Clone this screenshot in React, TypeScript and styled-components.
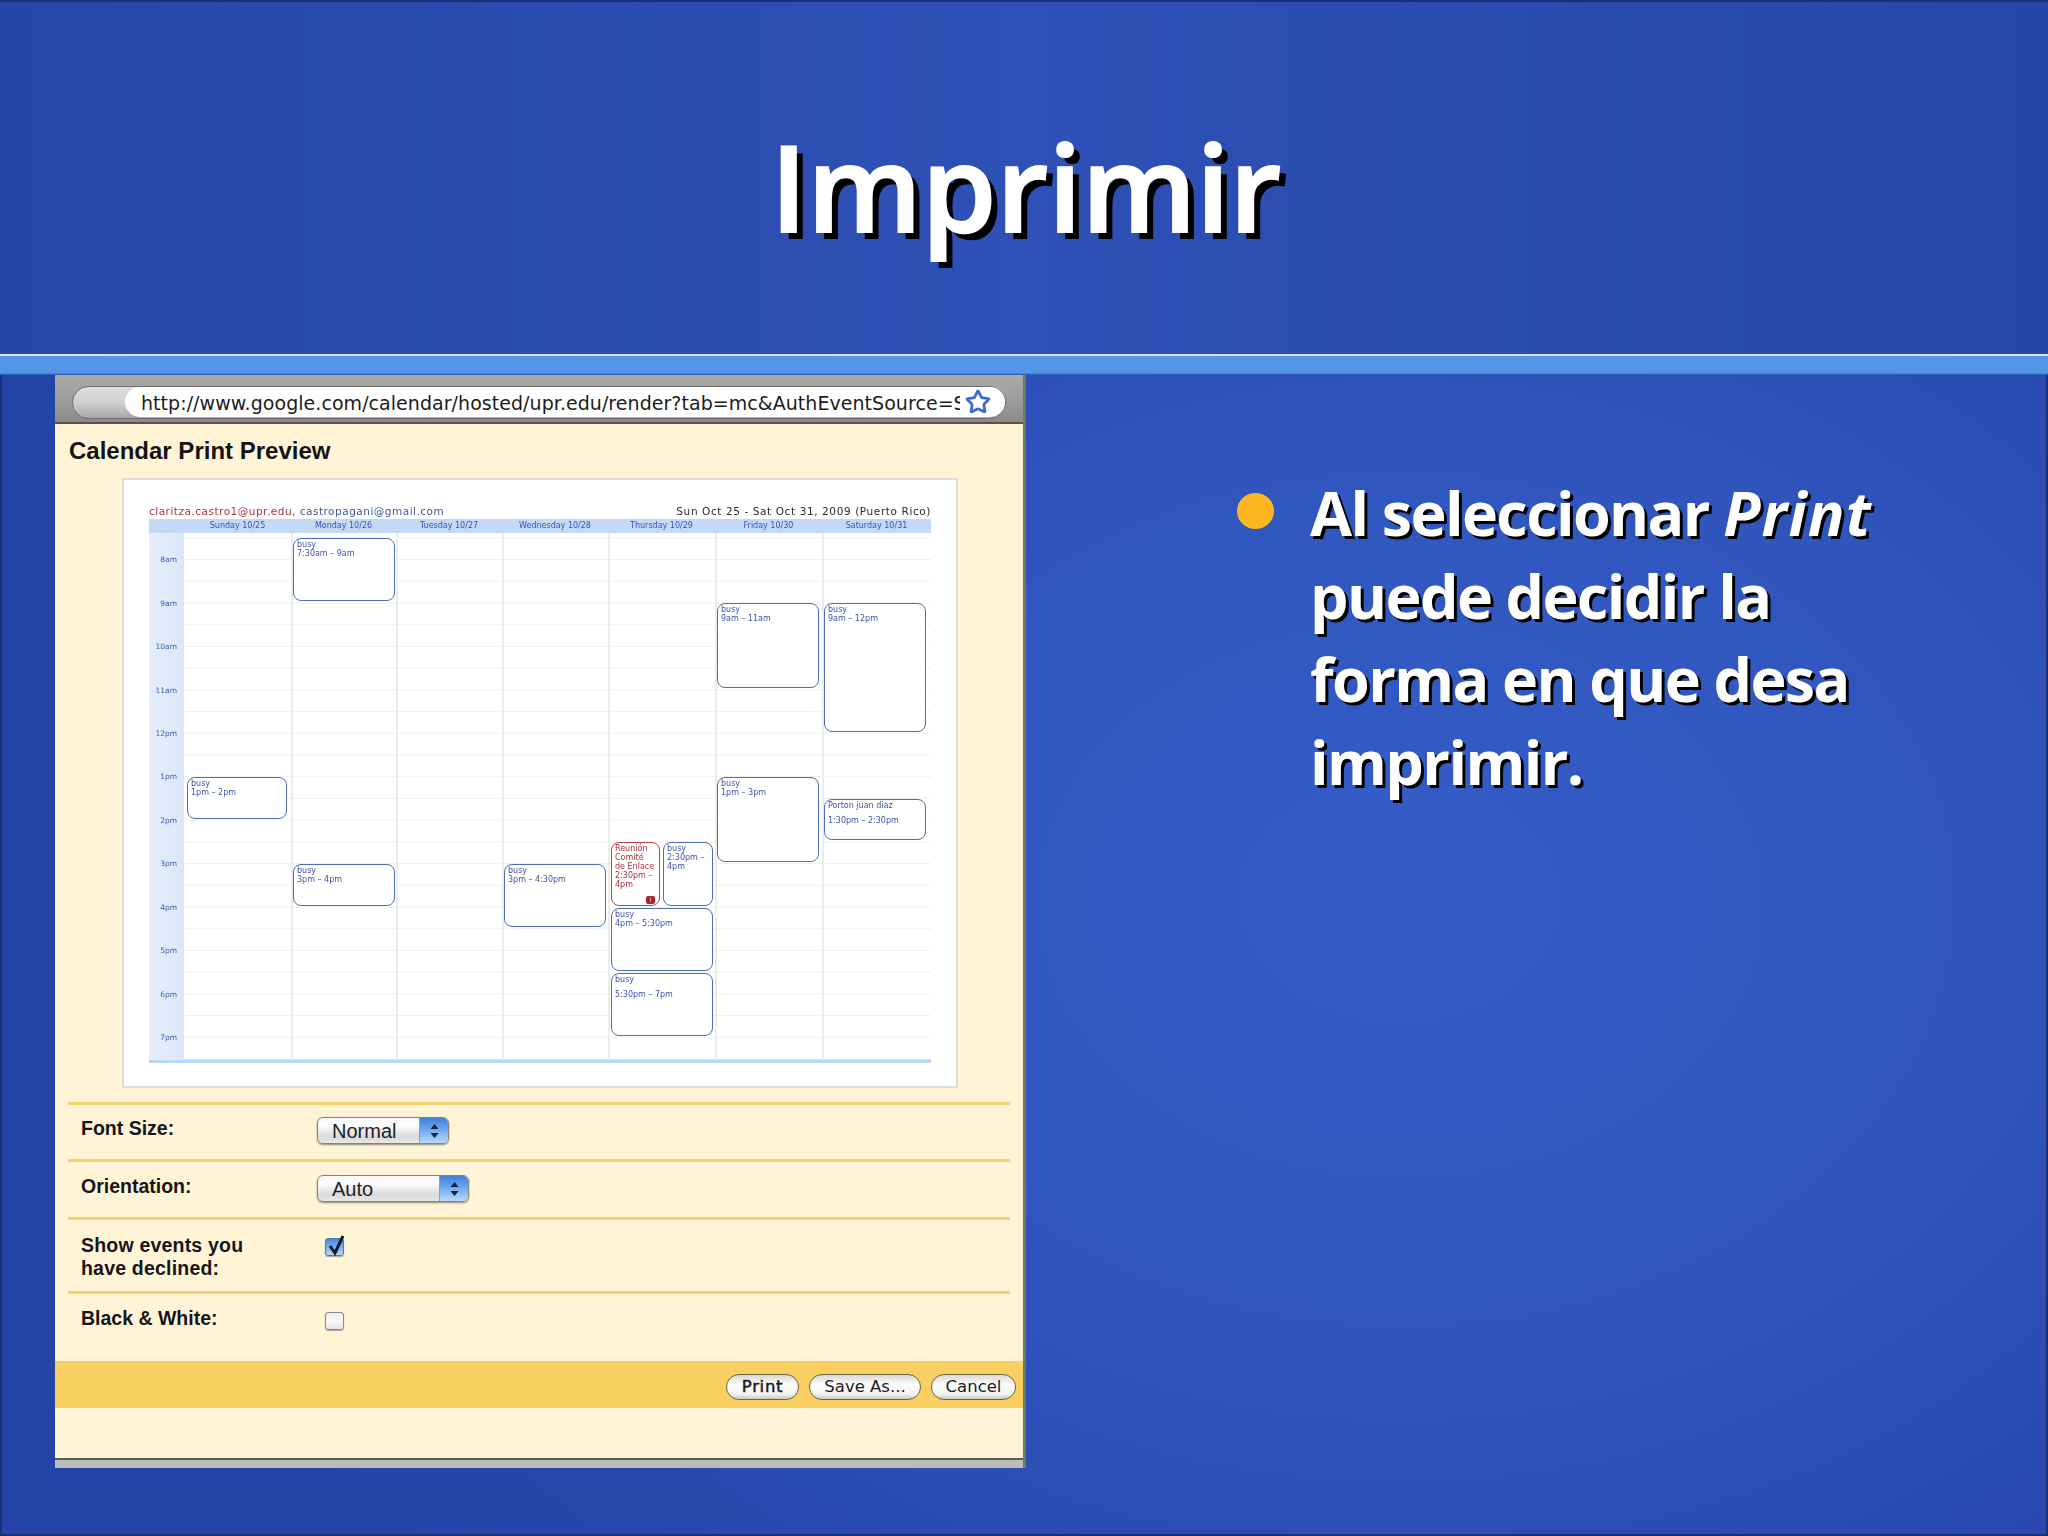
import React from "react";
import styled, { createGlobalStyle } from "styled-components";
import { Star } from "lucide-react";

const Global = createGlobalStyle`
  html, body { margin: 0; padding: 0; background: #2443a6; }
  * { box-sizing: border-box; }
`;

const Slide = styled.div`
  position: relative;
  width: 2048px;
  height: 1536px;
  overflow: hidden;
  display: flex;
  flex-direction: column;
  background: radial-gradient(ellipse 1300px 1000px at 1400px 900px, #355cc8 0%, #3056be 45%, #2848ae 80%, #2544a8 100%);
  box-shadow: inset 0 0 0 2px #1c2f7c;
  font-family: "Liberation Sans", Arial, sans-serif;
`;

const Header = styled.header`
  height: 354px;
  flex: none;
  padding-top: 106px;
  display: flex;
  justify-content: center;
  background: linear-gradient(90deg, #2646a8 0%, #2f50b6 50%, #2646a8 100%);
  box-shadow: inset 0 2px 0 #1c2f7c;
`;

const Title = styled.h1`
  margin: 0 0 0 4px;
  font-family: "Open Sans", Lato, sans-serif;
  font-weight: 600;
  font-size: 120px;
  line-height: 160px;
  color: #fff;
  -webkit-text-stroke: 2px #fff;
  text-shadow: 7px 7px 0 #000;
`;

const Band = styled.div`
  height: 21px;
  flex: none;
  background: linear-gradient(180deg, #d4e4f8 0, #d4e4f8 2px, #5496e6 2px, #5496e6 19px, #3b6fc8 20px, #2c52b4 21px);
`;

const Content = styled.main`
  flex: 1;
  display: flex;
  align-items: flex-start;
`;

const Window = styled.section`
  margin-left: 55px;
  width: 971px;
  height: 1093px;
  flex: none;
  display: flex;
  flex-direction: column;
  background: #fff4d6;
  border-right: 3px solid #6f7a56;
`;

const Toolbar = styled.div`
  height: 49px;
  flex: none;
  padding: 11px 0 0 17px;
  background: linear-gradient(180deg, #aaaaa8 0%, #9a9a98 60%, #8a8a88 100%);
  border-bottom: 2px solid #55554f;
`;

const UrlBar = styled.div`
  width: 934px;
  height: 33px;
  padding-left: 52px;
  border-radius: 17px;
  border: 1px solid #6e6e6c;
  background: linear-gradient(180deg, #dedede 0%, #d0d0d0 50%, #a8a8a8 100%);
`;

const UrlField = styled.div`
  height: 30px;
  padding-left: 16px;
  display: flex;
  align-items: center;
  border-radius: 15px;
  background: #fff;
`;

const UrlText = styled.span`
  width: 819px;
  flex: none;
  padding-top: 2px;
  overflow: hidden;
  white-space: nowrap;
  font-family: "DejaVu Sans", sans-serif;
  font-size: 19px;
  letter-spacing: 0.05px;
  color: #1c1c1c;
`;

const StarSlot = styled.span`
  display: flex;
  margin-left: 5px;
  color: #3a6dcc;
`;

const PreviewTitle = styled.h2`
  margin: 13px 0 0 14px;
  font-size: 24px;
  line-height: 28px;
  font-weight: 700;
  color: #141414;
`;

const PreviewBox = styled.div`
  margin: 13px 0 0 67px;
  width: 836px;
  height: 610px;
  flex: none;
  padding: 24px 25px 0;
  background: #fff;
  border: 2px solid #dcdcd4;
  filter: blur(0.4px);
  font-family: "DejaVu Sans", sans-serif;
`;

const CalHeading = styled.div`
  height: 14px;
  display: flex;
  justify-content: space-between;
  align-items: center;
  font-size: 10.5px;
  letter-spacing: 0.5px;
  white-space: nowrap;
`;

const Owner = styled.span<{ $red?: boolean }>`
  color: ${(p) => (p.$red ? "#a83840" : "#3f5a9c")};
`;

const RangeText = styled.span`
  color: #2a2a2a;
  font-size: 10.5px;
  letter-spacing: 0.6px;
`;

const columns = "35px 107px 105px 106px 106px 107px 107px 109px";

const DayHeader = styled.div`
  display: grid;
  grid-template-columns: ${columns};
  height: 14px;
  margin-top: 1px;
  background: #c4d9f8;
`;

const DayName = styled.div`
  text-align: center;
  font-size: 8px;
  line-height: 14px;
  color: #3553b8;
  white-space: nowrap;
`;

const CalBody = styled.div`
  display: grid;
  grid-template-columns: ${columns};
  height: 526px;
`;

const HourColumn = styled.div`
  padding-top: 5.3px;
  background: linear-gradient(90deg, #e6eefb 0%, #dbe6f9 100%);
`;

const Hour = styled.div`
  height: 43.45px;
  padding-right: 7px;
  text-align: right;
  font-size: 7.5px;
  line-height: 43.45px;
  color: #3c5ab4;
`;

const DayColumn = styled.div<{ $first?: boolean }>`
  position: relative;
  background-image: linear-gradient(#f0f0f0 1px, transparent 1px);
  background-size: 100% 21.725px;
  background-position: 0 4.3px;
  border-left: ${(p) => (p.$first ? "0" : "2px solid #ecece8")};
`;

const Event = styled.div<{ $top: number; $height: number; $left: number; $width: number; $red?: boolean }>`
  position: absolute;
  top: ${(p) => p.$top}px;
  left: ${(p) => p.$left}px;
  width: ${(p) => p.$width}px;
  height: ${(p) => p.$height}px;
  padding: 1px 1px 0 3px;
  background: #fff;
  border: 1.8px solid ${(p) => (p.$red ? "#b04850" : "#4c6fb2")};
  border-radius: 8px;
  font-size: 8px;
  line-height: 9px;
  white-space: pre-line;
  color: ${(p) => (p.$red ? "#a83038" : "#3c55a8")};
`;

const EventName = styled.div<{ $gap?: number }>`
  margin-bottom: ${(p) => p.$gap ?? 0}px;
`;

const Badge = styled.span`
  position: absolute;
  right: 4px;
  bottom: 1px;
  width: 9px;
  height: 8px;
  border-radius: 2px;
  background: #a82830;
  color: #fff;
  font-size: 6px;
  line-height: 8px;
  text-align: center;
`;

const CalFoot = styled.div`
  height: 4px;
  background: #bcd6f7;
`;

const Form = styled.div`
  margin: 14px 0 0 13px;
  width: 942px;
`;

const Row = styled.div<{ $h: number; $pad: number }>`
  height: ${(p) => p.$h}px;
  padding: ${(p) => p.$pad}px 0 0 13px;
  display: grid;
  grid-template-columns: 236px 1fr;
  align-items: start;
  border-top: 3px solid #f7cf6c;
`;

const Label = styled.div<{ $wide?: boolean }>`
  font-size: 19.5px;
  line-height: 23px;
  font-weight: 700;
  color: #16161a;
  letter-spacing: ${(p) => (p.$wide ? "0.2px" : "0")};
`;

const Select = styled.div<{ $w: number }>`
  width: ${(p) => p.$w}px;
  height: 27px;
  display: flex;
  justify-content: space-between;
  overflow: hidden;
  border: 1px solid #85857f;
  border-radius: 6px;
  background: linear-gradient(180deg, #f6f6f6 0%, #fdfdfd 30%, #dadada 75%, #e8e8e8 100%);
  box-shadow: 0 1px 2px #8c8a78;
  font-size: 20px;
  line-height: 27px;
  color: #1e1e1e;
  padding-left: 14px;
`;

const SelectArrows = styled.span`
  width: 29px;
  display: flex;
  align-items: center;
  justify-content: center;
  border-left: 1px solid #7aa0d8;
  background: linear-gradient(180deg, #3f7fd8 0%, #6aa8ee 45%, #b8d8fa 100%);
`;

const Check = styled.div<{ $top: number; $on?: boolean }>`
  position: relative;
  margin: ${(p) => p.$top}px 0 0 8px;
  width: 19px;
  height: 18px;
  border: 1px solid ${(p) => (p.$on ? "#4f77b8" : "#8a8a84")};
  border-radius: 3px;
  box-shadow: 0 1px 1px #a8a690;
  background: ${(p) =>
    p.$on
      ? "linear-gradient(180deg, #4a88dc 0%, #7fb8f2 60%, #b4d6f8 100%)"
      : "linear-gradient(180deg, #ececec 0%, #fafafa 50%, #e4e4e4 100%)"};
`;

const CheckMark = styled.svg`
  position: absolute;
  left: 1px;
  top: -5px;
`;

const Footer = styled.div`
  height: 47px;
  flex: none;
  display: flex;
  justify-content: flex-end;
  align-items: flex-start;
  gap: 10px;
  padding: 13px 7px 0 0;
  background: #f9cf62;
`;

const Button = styled.div<{ $w: number; $strong?: boolean }>`
  width: ${(p) => p.$w}px;
  height: 26px;
  border-radius: 13px;
  border: 1.5px solid #6c6448;
  background: linear-gradient(180deg, #d8d8d4 0%, #fdfdfd 40%, #f2f2f0 80%, #c8c8c0 100%);
  font-family: "DejaVu Sans", sans-serif;
  font-size: 16.5px;
  letter-spacing: ${(p) => (p.$strong ? "0.7px" : "0")};
  -webkit-text-stroke: ${(p) => (p.$strong ? "0.5px #1a1a2a" : "0")};
  line-height: 23px;
  text-align: center;
  color: #1a1a2a;
`;

const Spacer = styled.div`
  flex: 1;
`;

const BottomStrip = styled.div`
  height: 10px;
  flex: none;
  background: #bcbcba;
  border-top: 2px solid #5c5c58;
`;

const Side = styled.aside`
  margin: 96px 0 0 211px;
  display: flex;
  align-items: flex-start;
`;

const Dot = styled.span`
  width: 37px;
  height: 36px;
  flex: none;
  margin-top: 22px;
  border-radius: 50%;
  background: #fdb520;
`;

const BodyText = styled.p`
  margin: 0 0 0 36px;
  width: 620px;
  font-family: "Open Sans", Lato, sans-serif;
  font-weight: 700;
  font-size: 61px;
  line-height: 83px;
  letter-spacing: -1.6px;
  color: #fff;
  text-shadow: 3px 3px 0 #000;
  em { font-style: italic; letter-spacing: 1.2px; }
`;

const HOURS = ["8am", "9am", "10am", "11am", "12pm", "1pm", "2pm", "3pm", "4pm", "5pm", "6pm", "7pm"];

const y = (t: number) => (t - 8) * 43.45 + 27;

type Ev = {
  from: number;
  to: number;
  left?: number;
  width?: number;
  name: string;
  time: string;
  red?: boolean;
  gap?: number;
  badge?: boolean;
};

const DAYS: { name: string; events: Ev[] }[] = [
  { name: "Sunday 10/25", events: [{ from: 13, to: 14, name: "busy", time: "1pm – 2pm", left: 3, width: 100 }] },
  {
    name: "Monday 10/26",
    events: [
      { from: 7.5, to: 9, name: "busy", time: "7:30am – 9am" },
      { from: 15, to: 16, name: "busy", time: "3pm – 4pm" },
    ],
  },
  { name: "Tuesday 10/27", events: [] },
  { name: "Wednesday 10/28", events: [{ from: 15, to: 16.5, name: "busy", time: "3pm – 4:30pm" }] },
  {
    name: "Thursday 10/29",
    events: [
      {
        from: 14.5,
        to: 16,
        name: "Reunión\nComité\nde Enlace",
        time: "2:30pm –\n4pm",
        red: true,
        left: 1,
        width: 49,
        badge: true,
      },
      { from: 14.5, to: 16, name: "busy", time: "2:30pm –\n4pm", left: 53, width: 50 },
      { from: 16, to: 17.5, name: "busy", time: "4pm – 5:30pm", left: 1 },
      { from: 17.5, to: 19, name: "busy", time: "5:30pm – 7pm", left: 1, gap: 6 },
    ],
  },
  {
    name: "Friday 10/30",
    events: [
      { from: 9, to: 11, name: "busy", time: "9am – 11am" },
      { from: 13, to: 15, name: "busy", time: "1pm – 3pm" },
    ],
  },
  {
    name: "Saturday 10/31",
    events: [
      { from: 9, to: 12, name: "busy", time: "9am – 12pm" },
      { from: 13.5, to: 14.5, name: "Porton juan diaz", time: "1:30pm – 2:30pm", gap: 6 },
    ],
  },
];

const Arrows = () => (
  <svg width="11" height="16" viewBox="0 0 11 16">
    <path d="M5.5 1 L9.5 6 H1.5 Z M5.5 15 L1.5 10 H9.5 Z" fill="#16243c" />
  </svg>
);

export default function App() {
  return (
    <Slide>
      <Global />
      <Header>
        <Title>Imprimir</Title>
      </Header>
      <Band />
      <Content>
        <Window>
          <Toolbar>
            <UrlBar>
              <UrlField>
                <UrlText>http://www.google.com/calendar/hosted/upr.edu/render?tab=mc&amp;AuthEventSource=S</UrlText>
                <StarSlot>
                  <Star size={26} strokeWidth={2.6} />
                </StarSlot>
              </UrlField>
            </UrlBar>
          </Toolbar>
          <PreviewTitle>Calendar Print Preview</PreviewTitle>
          <PreviewBox>
            <CalHeading>
              <span>
                <Owner $red>claritza.castro1@upr.edu</Owner>
                <Owner>, castropagani@gmail.com</Owner>
              </span>
              <RangeText>Sun Oct 25 - Sat Oct 31, 2009 (Puerto Rico)</RangeText>
            </CalHeading>
            <DayHeader>
              <span />
              {DAYS.map((d) => (
                <DayName key={d.name}>{d.name}</DayName>
              ))}
            </DayHeader>
            <CalBody>
              <HourColumn>
                {HOURS.map((h) => (
                  <Hour key={h}>{h}</Hour>
                ))}
              </HourColumn>
              {DAYS.map((d, i) => (
                <DayColumn key={d.name} $first={i === 0}>
                  {d.events.map((e) => (
                    <Event
                      key={e.name + e.from + e.left}
                      $top={y(e.from)}
                      $height={(e.to - e.from) * 43.45 - 2}
                      $left={e.left ?? 0}
                      $width={e.width ?? 102}
                      $red={e.red}
                    >
                      <EventName $gap={e.gap}>{e.name}</EventName>
                      {e.time}
                      {e.badge && <Badge>!</Badge>}
                    </Event>
                  ))}
                </DayColumn>
              ))}
            </CalBody>
            <CalFoot />
          </PreviewBox>
          <Form>
            <Row $h={57} $pad={12}>
              <Label>Font Size:</Label>
              <Select $w={132}>
                Normal
                <SelectArrows>
                  <Arrows />
                </SelectArrows>
              </Select>
            </Row>
            <Row $h={58} $pad={13}>
              <Label>Orientation:</Label>
              <Select $w={152}>
                Auto
                <SelectArrows>
                  <Arrows />
                </SelectArrows>
              </Select>
            </Row>
            <Row $h={74} $pad={14}>
              <Label $wide>
                Show events you
                <br />
                have declined:
              </Label>
              <Check $top={4} $on>
                <CheckMark width="20" height="22" viewBox="0 0 20 22">
                  <path d="M3 12 L8 19 L16 2" fill="none" stroke="#10182c" strokeWidth="3" />
                </CheckMark>
              </Check>
            </Row>
            <Row $h={70} $pad={13}>
              <Label>Black &amp; White:</Label>
              <Check $top={5} />
            </Row>
          </Form>
          <Footer>
            <Button $w={73} $strong>
              Print
            </Button>
            <Button $w={112}>Save As...</Button>
            <Button $w={85}>Cancel</Button>
          </Footer>
          <Spacer />
          <BottomStrip />
        </Window>
        <Side>
          <Dot />
          <BodyText>
            Al seleccionar <em>Print</em> puede decidir la forma en que desa imprimir.
          </BodyText>
        </Side>
      </Content>
    </Slide>
  );
}
